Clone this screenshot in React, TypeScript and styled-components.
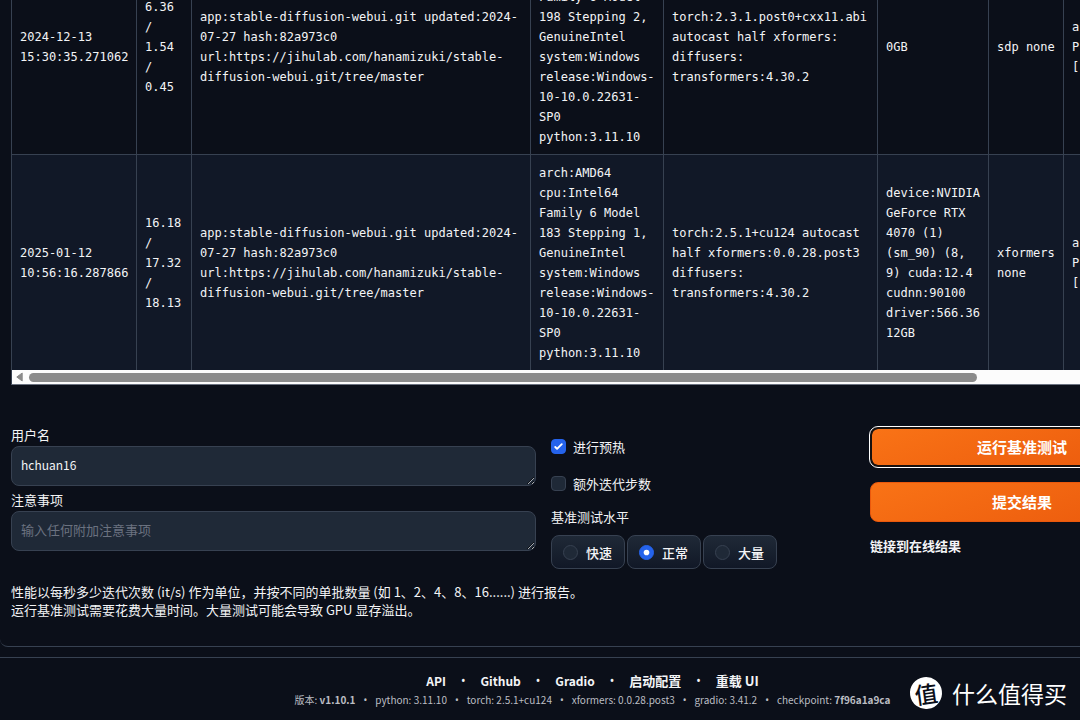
import React from "react";
import styled, { createGlobalStyle, css } from "styled-components";

const sans = '"Noto Sans CJK SC", "Noto Sans", sans-serif';
const mono = '"DejaVu Sans Mono", "Liberation Mono", monospace';

const GlobalStyle = createGlobalStyle`
  * { box-sizing: border-box; }
  body {
    margin: 0;
    background: #0b0f19;
    color: #f3f4f6;
    font-family: ${sans};
    font-size: 13px;
  }
`;

const Viewport = styled.div`
  position: relative;
  display: flex;
  flex-direction: column;
  justify-content: flex-end;
  height: 100vh;
  overflow: hidden;
`;

const Page = styled.div`
  flex: none;
  min-width: 1185px;
`;

const Panel = styled.main`
  padding: 0 11px 27px;
  border-bottom: 1px solid #374151;
  border-radius: 0 0 8px 8px;
`;

const TableFrame = styled.div`
  border: 1px solid #374151;
  border-bottom-color: #6b7280;
  overflow: hidden;
`;

const DataTable = styled.table`
  table-layout: fixed;
  width: 1382px;
  border-collapse: collapse;
  font: 12px/20px ${mono};
  margin-left: -1px;
`;

const Row = styled.tr<{ $shaded?: boolean }>`
  background: ${(p) => (p.$shaded ? "#111827" : "#0b0f19")};
`;

const Cell = styled.td`
  padding: 8px 8px 7px;
  border-left: 1px solid #374151;
  border-bottom: 1px solid #374151;
  white-space: pre;
  vertical-align: middle;
  ${Row}:last-child & {
    border-bottom: 0;
  }
`;

const ScrollTrack = styled.div`
  display: flex;
  align-items: center;
  gap: 6px;
  height: 14px;
  padding: 0 18px 0 4px;
  background: #fcfcfc;
`;

const ScrollThumb = styled.div`
  width: 948px;
  height: 9px;
  border-radius: 5px;
  background: #8b8b8b;
`;

const Form = styled.form`
  display: grid;
  grid-template-columns: 525fr 304fr 304fr;
  gap: 15px;
  margin-top: 42px;
`;

const Fields = styled.div`
  display: flex;
  flex-direction: column;
  gap: 6px;
`;

const Field = styled.label`
  display: flex;
  flex-direction: column;
  gap: 4px;
  line-height: 15px;
`;

const TextArea = styled.textarea<{ $latin?: boolean }>`
  display: block;
  width: 100%;
  height: 40px;
  padding: 8px 9px;
  border: 1px solid #374151;
  border-radius: 8px;
  background: #1f2937;
  color: #f3f4f6;
  font: ${(p) => (p.$latin ? 12 : 13)}px/20px ${sans};
  overflow: hidden;
  resize: both;
  &::placeholder {
    color: #6b7280;
  }
`;

const Options = styled.div`
  display: flex;
  flex-direction: column;
  gap: 16px;
  padding-top: 9px;
`;

const CheckLabel = styled.label`
  display: flex;
  align-items: center;
  gap: 7px;
  height: 21px;
`;

const tick =
  "url(\"data:image/svg+xml,%3Csvg viewBox='0 0 16 16' fill='white' xmlns='http://www.w3.org/2000/svg'%3E%3Cpath d='M12.207 4.793a1 1 0 010 1.414l-5 5a1 1 0 01-1.414 0l-2-2a1 1 0 011.414-1.414L6.5 9.086l4.293-4.293a1 1 0 011.414 0z'/%3E%3C/svg%3E\")";
const dot =
  "url(\"data:image/svg+xml,%3Csvg viewBox='0 0 16 16' fill='white' xmlns='http://www.w3.org/2000/svg'%3E%3Ccircle cx='8' cy='8' r='3'/%3E%3C/svg%3E\")";

const choice = css`
  appearance: none;
  flex: none;
  width: 15px;
  height: 15px;
  margin: 0;
  border: 1px solid #374151;
  background: #1f2937;
`;

const Checkbox = styled.input`
  ${choice}
  border-radius: 4px;
  &:checked {
    border-color: #2563eb;
    background: #2563eb ${tick} center / 15px 15px;
  }
`;

const Radio = styled.input`
  ${choice}
  border-radius: 50%;
  &:checked {
    border-color: #2563eb;
    background: #2563eb ${dot} center / 15px 15px;
  }
`;

const Levels = styled.fieldset`
  margin: 0;
  padding: 0;
  border: 0;
  min-width: 0;
`;

const Legend = styled.legend`
  padding: 0;
  margin-bottom: 11px;
  line-height: 14px;
`;

const Chips = styled.div`
  display: flex;
  gap: 2px;
`;

const Chip = styled.label`
  display: flex;
  align-items: center;
  gap: 8px;
  width: 74px;
  height: 34px;
  padding: 0 11px;
  border: 1px solid #374151;
  border-radius: 8px;
  background: linear-gradient(to bottom, #1f2937, #111827);
  font-weight: 500;
  white-space: nowrap;
`;

const Actions = styled.div`
  display: flex;
  flex-direction: column;
  gap: 15px;
`;

const PrimaryButton = styled.button<{ $focused?: boolean }>`
  height: 40px;
  padding: 0;
  border: 1px solid #ea580c;
  border-radius: 8px;
  background: linear-gradient(160deg, #f97316, #ea580c);
  color: #fff;
  font: 700 15px/20px ${sans};
  ${(p) =>
    p.$focused &&
    css`
      border: 2px solid #17110f;
      background-clip: padding-box;
      outline: 1px solid #fff;
    `}
`;

const ResultLink = styled.p`
  margin: 0;
  font-weight: 700;
  line-height: 18px;
`;

const Note = styled.p`
  margin: 14px 0 0;
  line-height: 18px;
`;

const Footer = styled.footer`
  display: flex;
  flex-direction: column;
  align-items: center;
  margin-top: 10px;
  padding: 13px 0 11px;
  border-top: 1px solid #374151;
`;

const FooterLinks = styled.nav`
  display: flex;
  gap: 15px;
  font-size: 12px;
  font-weight: 700;
  line-height: 20px;
`;

const FooterLink = styled.a<{ $cjk?: boolean }>`
  color: #f3f4f6;
  font-size: ${(p) => (p.$cjk ? 13 : 12)}px;
  text-decoration: none;
`;

const Bullet = styled.span`
  font-family: "Noto Sans", sans-serif;
  font-weight: 400;
`;

const Versions = styled.div`
  display: flex;
  gap: 8px;
  color: #bcbec3;
  font-size: 10px;
  line-height: 18px;
`;

const Watermark = styled.div`
  position: absolute;
  right: 13px;
  bottom: 11px;
  display: flex;
  align-items: center;
  gap: 10px;
  color: #fff;
  font-size: 23px;
  line-height: 32px;
`;

const Seal = styled.span`
  display: grid;
  place-items: center;
  width: 32px;
  height: 32px;
  border-radius: 50%;
  background: #fff;
  color: #0b0f19;
  font-weight: 500;
  line-height: 32px;
  transform: rotate(-8deg);
`;

const columnWidths = [125, 55, 339, 133, 214, 111, 75, 330];

const app =
  "app:stable-diffusion-webui.git updated:2024-\n07-27 hash:82a973c0\nurl:https://jihulab.com/hanamizuki/stable-\ndiffusion-webui.git/tree/master";
const system = (model: string) =>
  `arch:AMD64\ncpu:Intel64\nFamily 6 Model\n${model},\nGenuineIntel\nsystem:Windows\nrelease:Windows-\n10-10.0.22631-\nSP0\npython:3.11.10`;

const rows = [
  [
    "2024-12-13\n15:30:35.271062",
    "6.36\n/\n1.54\n/\n0.45",
    app,
    system("198 Stepping 2"),
    "torch:2.3.1.post0+cxx11.abi\nautocast half xformers:\ndiffusers:\ntransformers:4.30.2",
    "0GB",
    "sdp none",
    "ar\nPr\n['",
  ],
  [
    "2025-01-12\n10:56:16.287866",
    "16.18\n/\n17.32\n/\n18.13",
    app,
    system("183 Stepping 1"),
    "torch:2.5.1+cu124 autocast\nhalf xformers:0.0.28.post3\ndiffusers:\ntransformers:4.30.2",
    "device:NVIDIA\nGeForce RTX\n4070 (1)\n(sm_90) (8,\n9) cuda:12.4\ncudnn:90100\ndriver:566.36\n12GB",
    "xformers\nnone",
    "ar\nPr\n['",
  ],
];

const links = ["API", "Github", "Gradio", "启动配置", "重载 UI"];
const levels = ["快速", "正常", "大量"];
const versions = [
  <>版本: <b>v1.10.1</b></>,
  "python: 3.11.10",
  "torch: 2.5.1+cu124",
  "xformers: 0.0.28.post3",
  "gradio: 3.41.2",
  <>checkpoint: <b>7f96a1a9ca</b></>,
];

export default function App() {
  return (
    <Viewport>
      <GlobalStyle />
      <Page>
        <Panel>
          <TableFrame>
            <DataTable>
              <colgroup>
                {columnWidths.map((w, i) => (
                  <col key={i} width={w} />
                ))}
              </colgroup>
              <tbody>
                {rows.map((cells, r) => (
                  <Row key={r} $shaded={r % 2 === 1}>
                    {cells.map((text, c) => (
                      <Cell key={c}>{text}</Cell>
                    ))}
                  </Row>
                ))}
              </tbody>
            </DataTable>
            <ScrollTrack>
              <svg width="7" height="10" viewBox="0 0 7 10" aria-hidden="true">
                <path d="M6.2 1v8L.8 5z" fill="#8b8b8b" stroke="#8b8b8b" strokeLinejoin="round" />
              </svg>
              <ScrollThumb />
            </ScrollTrack>
          </TableFrame>

          <Form onSubmit={(e) => e.preventDefault()}>
            <Fields>
              <Field>
                用户名
                <TextArea $latin rows={1} defaultValue="hchuan16" />
              </Field>
              <Field>
                注意事项
                <TextArea rows={1} placeholder="输入任何附加注意事项" />
              </Field>
            </Fields>

            <Options>
              <CheckLabel>
                <Checkbox type="checkbox" defaultChecked />
                进行预热
              </CheckLabel>
              <CheckLabel>
                <Checkbox type="checkbox" />
                额外迭代步数
              </CheckLabel>
              <Levels>
                <Legend>基准测试水平</Legend>
                <Chips>
                  {levels.map((name) => (
                    <Chip key={name}>
                      <Radio type="radio" name="level" value={name} defaultChecked={name === "正常"} />
                      {name}
                    </Chip>
                  ))}
                </Chips>
              </Levels>
            </Options>

            <Actions>
              <PrimaryButton type="button" $focused>运行基准测试</PrimaryButton>
              <PrimaryButton type="submit">提交结果</PrimaryButton>
              <ResultLink>链接到在线结果</ResultLink>
            </Actions>
          </Form>

          <Note>
            性能以每秒多少迭代次数 (it/s) 作为单位，并按不同的单批数量 (如 1、2、4、8、16......) 进行报告。
            <br />
            运行基准测试需要花费大量时间。大量测试可能会导致 GPU 显存溢出。
          </Note>
        </Panel>

        <Footer>
          <FooterLinks>
            {links.map((name, i) => (
              <React.Fragment key={name}>
                {i > 0 && <Bullet>•</Bullet>}
                <FooterLink href="#" $cjk={i > 2}>{name}</FooterLink>
              </React.Fragment>
            ))}
          </FooterLinks>
          <Versions>
            {versions.map((item, i) => (
              <React.Fragment key={i}>
                {i > 0 && <Bullet>•</Bullet>}
                <span>{item}</span>
              </React.Fragment>
            ))}
          </Versions>
        </Footer>
      </Page>
      <Watermark>
        <Seal>值</Seal>
        <span>什么值得买</span>
      </Watermark>
    </Viewport>
  );
}
